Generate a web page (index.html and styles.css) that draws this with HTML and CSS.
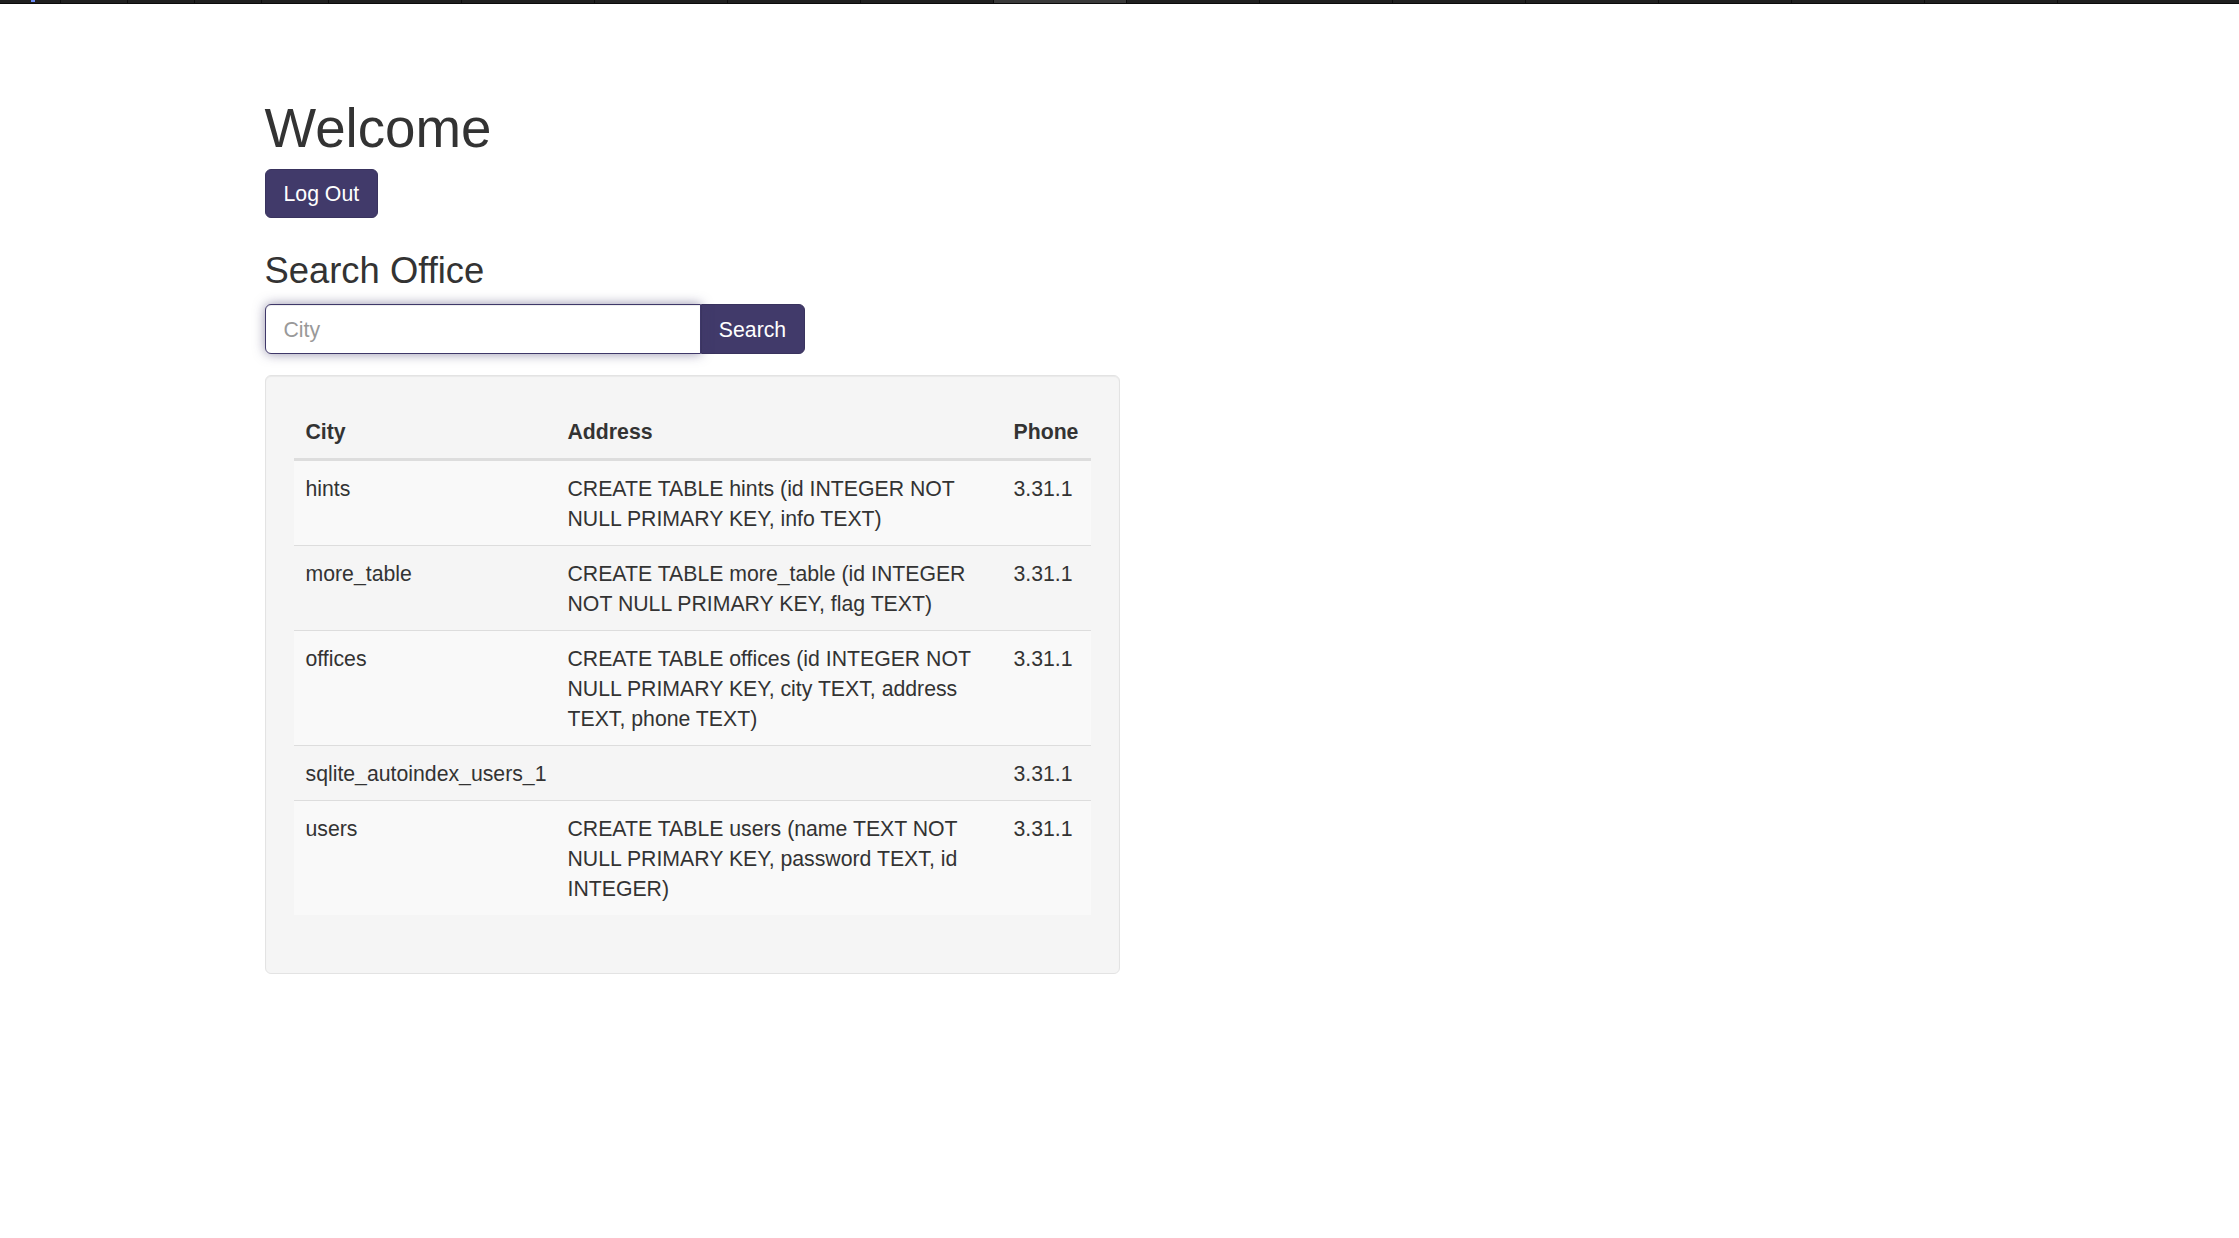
FILE: index.html
```html
<!DOCTYPE html>
<html lang="en">
<head>
<meta charset="utf-8">
<title>Welcome</title>
<link rel="stylesheet" href="styles.css">
</head>
<body>
<div class="tabstrip">
  <div class="seg seg-first"><span class="mark"></span></div>
  <div class="seg seg-s"></div>
  <div class="seg seg-s"></div>
  <div class="seg seg-s"></div>
  <div class="seg seg-s"></div>
  <div class="seg seg-l"></div>
  <div class="seg seg-l"></div>
  <div class="seg seg-l"></div>
  <div class="seg seg-l"></div>
  <div class="seg seg-l"></div>
  <div class="seg seg-l seg-active"></div>
  <div class="seg seg-l"></div>
  <div class="seg seg-l"></div>
  <div class="seg seg-l"></div>
  <div class="seg seg-l"></div>
  <div class="seg seg-l"></div>
  <div class="seg seg-l"></div>
  <div class="seg seg-l"></div>
  <div class="seg seg-rest"></div>
</div>
<div class="container">
  <h1 class="title">Welcome</h1>
  <button class="btn">Log Out</button>
  <h3 class="subtitle">Search Office</h3>
  <form class="input-group">
    <input class="form-control" type="text" placeholder="City" autofocus>
    <button class="btn btn-addon" type="button">Search</button>
  </form>
  <div class="well">
    <table class="table">
      <thead>
        <tr>
          <th class="col-city">City</th>
          <th class="col-addr">Address</th>
          <th class="col-phone">Phone</th>
        </tr>
      </thead>
      <tbody>
        <tr><td>hints</td><td>CREATE TABLE hints (id INTEGER NOT NULL PRIMARY KEY, info TEXT)</td><td>3.31.1</td></tr>
        <tr><td>more_table</td><td>CREATE TABLE more_table (id INTEGER NOT NULL PRIMARY KEY, flag TEXT)</td><td>3.31.1</td></tr>
        <tr><td>offices</td><td>CREATE TABLE offices (id INTEGER NOT NULL PRIMARY KEY, city TEXT, address TEXT, phone TEXT)</td><td>3.31.1</td></tr>
        <tr><td>sqlite_autoindex_users_1</td><td></td><td>3.31.1</td></tr>
        <tr><td>users</td><td>CREATE TABLE users (name TEXT NOT NULL PRIMARY KEY, password TEXT, id INTEGER)</td><td>3.31.1</td></tr>
      </tbody>
    </table>
  </div>
</div>
</body>
</html>
```
FILE: styles.css
```css
* { box-sizing: border-box; }
html, body {
  margin: 0;
  padding: 0;
  background: #ffffff;
}
body {
  font-family: "Liberation Sans", Arial, Helvetica, sans-serif;
  font-size: 21.25px;
  line-height: 30px;
  color: #333333;
}

/* top strip */
.tabstrip {
  display: flex;
  height: 4px;
  background: #1f1f1f;
  border-bottom: 1px solid #0b0b0b;
  overflow: hidden;
}
.seg {
  height: 3px;
  background: #202020;
  border-right: 1px solid #0c0c0c;
  flex: none;
  position: relative;
}
.seg-first { width: 61px; }
.seg-s { width: 67px; }
.seg-l { width: 133px; }
.seg-rest { flex: 1; border-right: 0; }
.seg-active { background: #3a3a3a; }
.mark {
  position: absolute;
  left: 31px;
  top: 0;
  width: 4px;
  height: 2px;
  background: #6d8cf5;
}

.container {
  width: 1710px;
  margin: 0 auto;
}

.title {
  margin: 95px 0 11px;
  font-size: 54.7px;
  line-height: 59px;
  font-weight: 500;
  color: #333333;
}

.btn {
  display: inline-block;
  font-family: inherit;
  font-size: 21.25px;
  line-height: 29px;
  padding: 10px 18px 8px;
  color: #ffffff;
  background: #413a6a;
  border: 1px solid #39335e;
  border-radius: 6px;
  cursor: pointer;
}

.subtitle {
  margin: 33px 0 13px;
  font-size: 36.4px;
  line-height: 40px;
  font-weight: 500;
  color: #333333;
}

.input-group {
  display: flex;
  margin: 0;
  width: 540px;
}
.form-control {
  width: 436px;
  height: 50px;
  padding: 10px 18px 8px;
  font-family: inherit;
  font-size: 21.25px;
  line-height: 30px;
  color: #555555;
  caret-color: #333333;
  background: #ffffff;
  border: 1px solid #3f3869;
  border-radius: 6px 0 0 6px;
  outline: none;
  box-shadow: inset 0 1px 1px rgba(0,0,0,0.075), 0 0 12px rgba(65,58,106,0.55);
  position: relative;
  z-index: 2;
}
.form-control::placeholder { color: #999999; }
.btn-addon {
  width: 104px;
  height: 50px;
  padding: 10px 0 8px;
  text-align: center;
  border-radius: 0 6px 6px 0;
  margin-left: 0;
}

.well {
  margin-top: 21px;
  width: 855px;
  padding: 28px;
  background: #f5f5f5;
  border: 1px solid #e3e3e3;
  border-radius: 6px;
  box-shadow: inset 0 1px 1px rgba(0,0,0,0.05);
}

.table {
  width: 797px;
  margin-bottom: 30px;
  border-collapse: collapse;
  table-layout: fixed;
  border-spacing: 0;
}
.table th,
.table td {
  padding: 13px 12px 11px;
  line-height: 30px;
  text-align: left;
}
.table th {
  font-weight: bold;
  vertical-align: bottom;
  border-bottom: 3px solid #dddddd;
}
.table td {
  vertical-align: top;
  border-top: 1px solid #dddddd;
}
.table tbody tr:nth-child(odd) { background: #f9f9f9; }
.col-city { width: 262px; }
.col-addr { width: 446px; }
.col-phone { width: 89px; }
```
